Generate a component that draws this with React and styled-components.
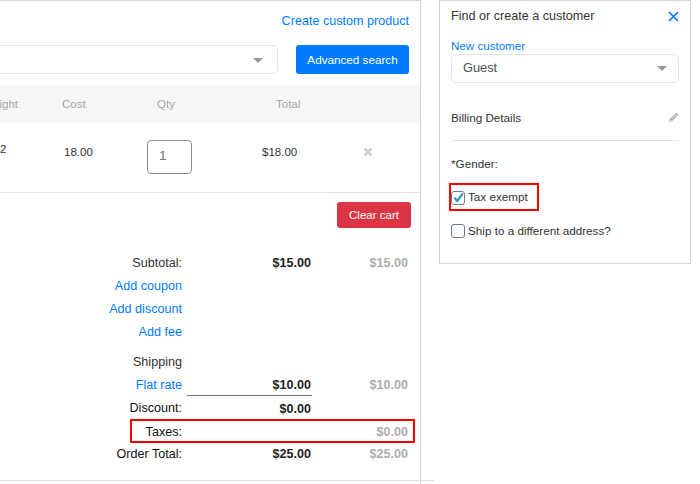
import styled, { createGlobalStyle } from "styled-components";
import { FaPencilAlt, FaTimes } from "react-icons/fa";

const GlobalStyle = createGlobalStyle`
  html, body {
    margin: 0;
    background: #fff;
    font-family: "Liberation Sans", Arial, sans-serif;
    color: #212529;
  }
  *, *::after { box-sizing: border-box; }
`;

const Page = styled.div`
  display: flex;
  align-items: flex-start;
  width: 700px;
  height: 484px;
  overflow: hidden;
`;

const CartPanel = styled.section`
  position: relative;
  flex: 0 0 421px;
  height: 484px;
  border-top: 1px solid #ced4da;
  border-right: 1px solid #ced4da;
  padding-top: 13px;
`;

const CreateRow = styled.div`
  display: flex;
  justify-content: flex-end;
  padding-right: 11px;
  height: 31px;
`;

const Link = styled.a`
  color: #007bff;
  font-size: 12.6px;
  line-height: 14px;
`;

const SearchRow = styled.div`
  display: flex;
  gap: 18px;
  align-items: stretch;
  height: 29px;
  padding-right: 11px;
`;

const SelectBox = styled.div`
  display: flex;
  align-items: center;
  justify-content: space-between;
  height: 29px;
  border: 1px solid #e4e6e8;
  border-radius: 5px;
  color: #495057;
  font-size: 12.8px;
  padding: 0 11px 0 11px;
`;

const ProductSelect = styled(SelectBox)`
  flex: 1;
  margin-left: -6px;
  padding-right: 14px;
  justify-content: flex-end;
`;

const Caret = styled.span`
  width: 0;
  height: 0;
  border-left: 5px solid transparent;
  border-right: 5px solid transparent;
  border-top: 5px solid #999;
  margin-top: 2px;
`;

const Button = styled.button`
  border: none;
  border-radius: 3px;
  color: #fff;
  font-family: inherit;
  font-size: ${(p) => p.$size}px;
  background: ${(p) => p.$bg};
  padding: 0;
  width: ${(p) => p.$w}px;
  height: ${(p) => p.$h}px;
`;

const TableRow = styled.div`
  display: grid;
  grid-template-columns: 18px 129px 115px 101px 1fr;
  font-size: 11.5px;
`;

const TableHead = styled(TableRow)`
  align-items: center;
  height: 38px;
  margin-top: 11px;
  background: #f7f7f7;
  color: #a5a5a5;
`;

const HeadCell = styled.span`
  padding-left: ${(p) => p.$pl || 0}px;
  white-space: nowrap;
`;

// the first column is cut off by the left edge of the picture
const ClippedHead = styled.span`
  display: flex;
  justify-content: flex-end;
  white-space: nowrap;
`;

const ItemRow = styled(TableRow)`
  align-items: start;
  height: 70px;
  border-bottom: 1px solid #dee2e6;
  color: #333;
`;

const QtyBox = styled.div`
  width: 45px;
  height: 34px;
  margin-top: 17px;
  border: 1px solid #868e96;
  border-radius: 4px;
  padding: 0 0 3px 11px;
  display: flex;
  align-items: center;
  color: #6c757d;
  font-size: 13.5px;
`;

const ItemCell = styled.span`
  padding-left: ${(p) => p.$pl || 0}px;
  margin-top: ${(p) => p.$mt}px;
  line-height: 14px;
  white-space: nowrap;
`;

const RemoveIcon = styled(FaTimes)`
  display: block;
  color: #c8c8c8;
  font-size: 12px;
  margin-left: -1px;
`;

const ClearRow = styled.div`
  display: flex;
  justify-content: flex-end;
  padding: 9px 9px 0 0;
  height: 58px;
`;

const TotalsTable = styled.div`
  display: flex;
  flex-direction: column;
`;

const TotalRow = styled.div`
  position: relative;
  display: grid;
  grid-template-columns: 182px 130px 96px;
  align-items: center;
  height: 23px;
  margin-top: ${(p) => p.$mt || 0}px;
  font-size: 12.6px;
`;

const Label = styled.span`
  text-align: right;
  color: ${(p) => (p.$dark ? "#111" : "#333")};
`;

const Amount = styled.strong`
  height: 100%;
  display: flex;
  align-items: center;
  justify-content: flex-end;
  margin-left: 5px;
  padding-right: 1px;
  padding-top: ${(p) => (p.$drop ? 2 : 0)}px;
  color: #222;
  ${(p) => p.$rule && "border-bottom: 1px solid #777;"}
`;

const MutedAmount = styled.strong`
  text-align: right;
  color: #adadad;
`;

const HighlightRow = styled(TotalRow)`
  padding-top: 2px;
  &::after {
    content: "";
    position: absolute;
    left: 130px;
    top: 0;
    width: 285px;
    height: 24px;
    border: 2px solid #f00;
  }
`;

const FooterRule = styled.div`
  position: absolute;
  left: 0;
  top: 479px;
  width: 434px;
  height: 1px;
  background: #dee2e6;
`;

const CustomerPanel = styled.aside`
  flex: 0 0 252px;
  height: 264px;
  margin-left: 18px;
  border: 1px solid #ced4da;
  padding: 8px 11px 0;
`;

const PanelHeader = styled.div`
  display: flex;
  justify-content: space-between;
  align-items: center;
  height: 14px;
  font-size: 12.6px;
  color: #333;
`;

const CloseIcon = styled.svg`
  width: 11px;
  height: 11px;
`;

const NewCustomer = styled(Link)`
  display: block;
  margin-top: 16px;
  font-size: 11.6px;
`;

const GuestSelect = styled(SelectBox)`
  margin-top: 1px;
  padding-bottom: 2px;
`;

const BillingRow = styled.div`
  display: flex;
  justify-content: space-between;
  align-items: center;
  height: 58px;
  border-bottom: 1px solid #dee2e6;
  padding-top: 11px;
  font-size: 11.7px;
  color: #333;
`;

const PencilIcon = styled(FaPencilAlt)`
  color: #aaa;
  font-size: 9px;
  margin-right: 1px;
`;

const Gender = styled.div`
  margin-top: 16px;
  height: 14px;
  font-size: 11.7px;
  line-height: 14px;
  color: #333;
`;

const CheckLabel = styled.label`
  display: flex;
  align-items: center;
  gap: 3px;
  height: 28px;
  margin-top: 5px;
  font-size: 11.7px;
  color: #333;
`;

const FlaggedCheckLabel = styled(CheckLabel)`
  width: 90px;
  margin: 12px 0 0 -2px;
  padding-bottom: 1px;
  border: 2px solid #f00;
`;

const CheckBox = styled.span`
  flex: 0 0 14px;
  width: 14px;
  height: 14px;
  border: 1px solid #6c7a89;
  border-radius: 3px;
  display: flex;
  align-items: center;
  justify-content: center;
  background: #fff;
  margin-top: 2px;
`;

const Tick = styled.svg`
  width: 11px;
  height: 11px;
`;

export default function App() {
  return (
    <>
      <GlobalStyle />
      <Page>
        <CartPanel>
          <CreateRow>
            <Link>Create custom product</Link>
          </CreateRow>
          <SearchRow>
            <ProductSelect>
              <Caret />
            </ProductSelect>
            <Button $bg="#007bff" $size={11.7} $w={113} $h={29}>Advanced search</Button>
          </SearchRow>
          <TableHead>
            <ClippedHead>Weight</ClippedHead>
            <HeadCell $pl={44}>Cost</HeadCell>
            <HeadCell $pl={10}>Qty</HeadCell>
            <HeadCell $pl={14}>Total</HeadCell>
            <span />
          </TableHead>
          <ItemRow>
            <ItemCell $mt={19}>2</ItemCell>
            <ItemCell $pl={46} $mt={22}>18.00</ItemCell>
            <QtyBox>1</QtyBox>
            <ItemCell $mt={22}>$18.00</ItemCell>
            <ItemCell $mt={23}><RemoveIcon /></ItemCell>
          </ItemRow>
          <ClearRow>
            <Button $bg="#dc3545" $size={11.5} $w={74} $h={26}>Clear cart</Button>
          </ClearRow>
          <TotalsTable>
            <TotalRow>
              <Label>Subtotal:</Label>
              <Amount>$15.00</Amount>
              <MutedAmount>$15.00</MutedAmount>
            </TotalRow>
            <TotalRow>
              <Label><Link>Add coupon</Link></Label>
            </TotalRow>
            <TotalRow>
              <Label><Link>Add discount</Link></Label>
            </TotalRow>
            <TotalRow>
              <Label><Link>Add fee</Link></Label>
            </TotalRow>
            <TotalRow $mt={7}>
              <Label>Shipping</Label>
            </TotalRow>
            <TotalRow>
              <Label><Link>Flat rate</Link></Label>
              <Amount $rule $drop>$10.00</Amount>
              <MutedAmount>$10.00</MutedAmount>
            </TotalRow>
            <TotalRow>
              <Label $dark>Discount:</Label>
              <Amount $drop>$0.00</Amount>
            </TotalRow>
            <HighlightRow>
              <Label $dark>Taxes:</Label>
              <span />
              <MutedAmount>$0.00</MutedAmount>
            </HighlightRow>
            <TotalRow>
              <Label $dark>Order Total:</Label>
              <Amount>$25.00</Amount>
              <MutedAmount>$25.00</MutedAmount>
            </TotalRow>
          </TotalsTable>
          <FooterRule />
        </CartPanel>
        <CustomerPanel>
          <PanelHeader>
            Find or create a customer
            <CloseIcon viewBox="0 0 11 11">
              <path d="M1 1 L10 10 M10 1 L1 10" stroke="#007bff" strokeWidth="1.7" fill="none" />
            </CloseIcon>
          </PanelHeader>
          <NewCustomer>New customer</NewCustomer>
          <GuestSelect>
            Guest
            <Caret />
          </GuestSelect>
          <BillingRow>
            Billing Details
            <PencilIcon />
          </BillingRow>
          <Gender>*Gender:</Gender>
          <FlaggedCheckLabel>
            <CheckBox>
              <Tick viewBox="0 0 11 11">
                <path d="M1.5 5.8 L4.2 9 L9.8 1.5" stroke="#2b9ad0" strokeWidth="2.2" fill="none" />
              </Tick>
            </CheckBox>
            Tax exempt
          </FlaggedCheckLabel>
          <CheckLabel>
            <CheckBox />
            Ship to a different address?
          </CheckLabel>
        </CustomerPanel>
      </Page>
    </>
  );
}
